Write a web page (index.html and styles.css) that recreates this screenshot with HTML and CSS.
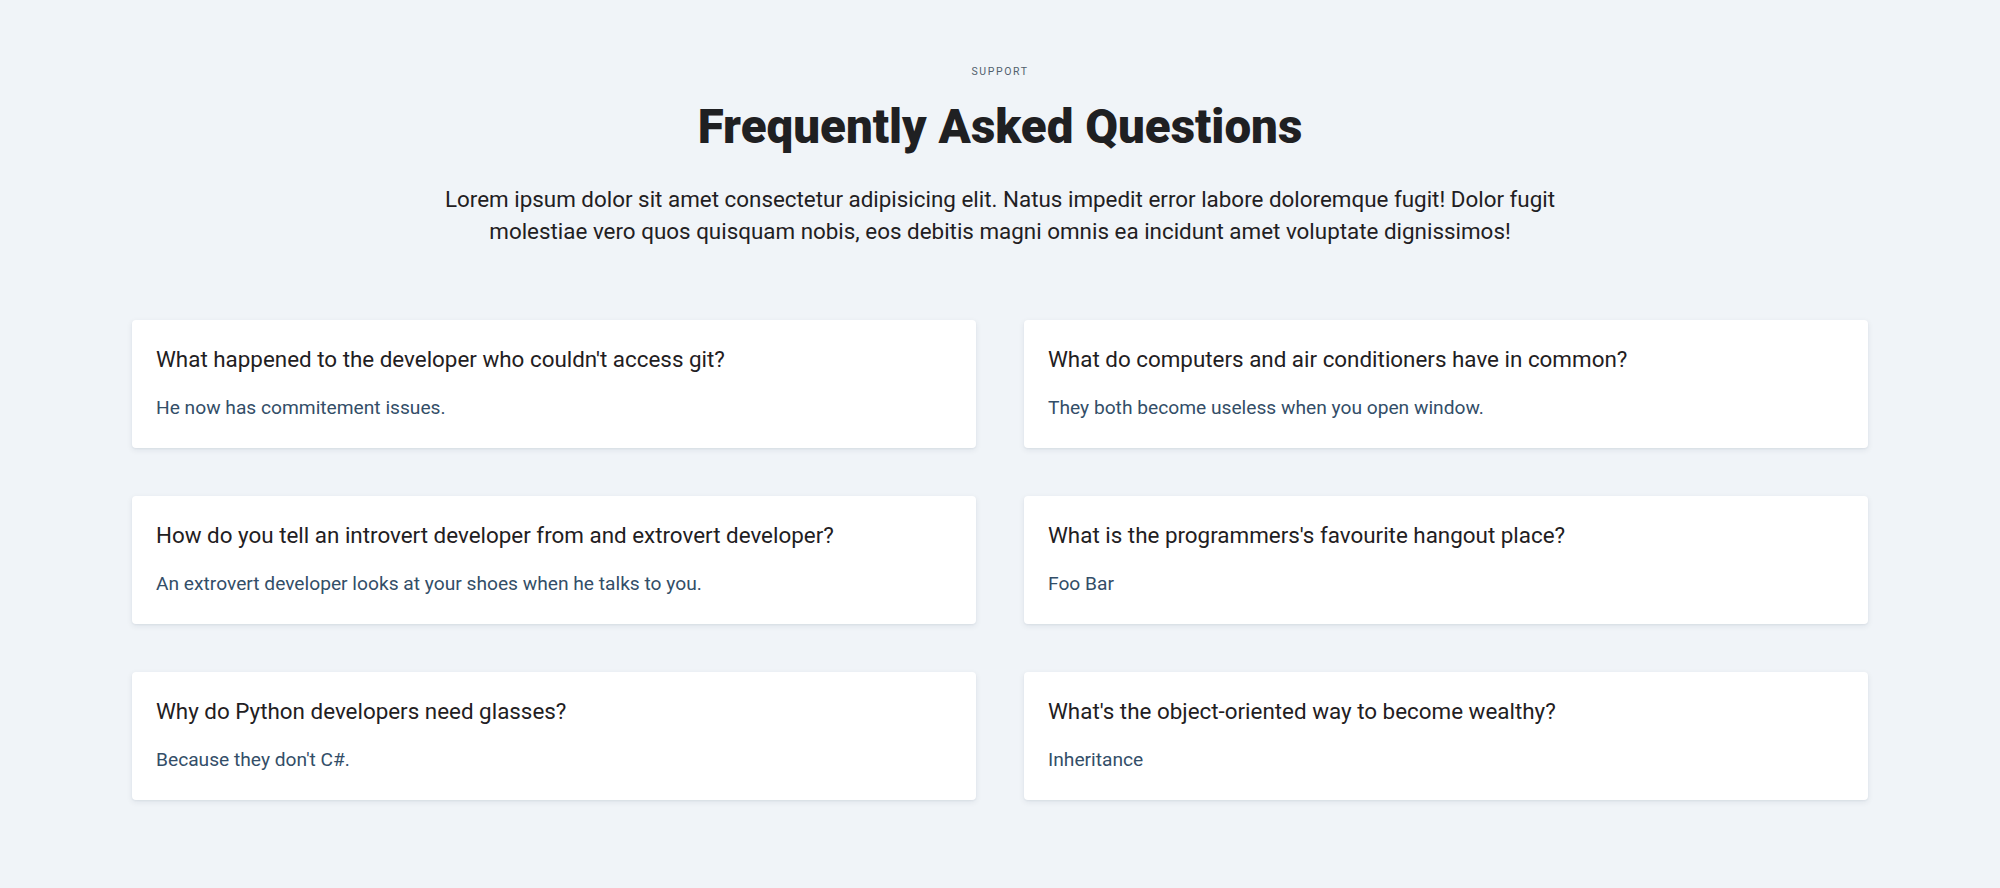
FILE: index.html
```html
<!DOCTYPE html>
<html lang="en">
<head>
<meta charset="utf-8">
<title>FAQ</title>
<link rel="stylesheet" href="styles.css">
</head>
<body>
<section class="faq">
  <header class="faq-header">
    <p class="eyebrow">Support</p>
    <h1 class="title">Frequently Asked Questions</h1>
    <p class="lead">Lorem ipsum dolor sit amet consectetur adipisicing elit. Natus impedit error labore doloremque fugit! Dolor fugit molestiae vero quos quisquam nobis, eos debitis magni omnis ea incidunt amet voluptate dignissimos!</p>
  </header>
  <div class="grid">
    <div class="card">
      <h3 class="q">What happened to the developer who couldn't access git?</h3>
      <p class="a">He now has commitement issues.</p>
    </div>
    <div class="card">
      <h3 class="q">What do computers and air conditioners have in common?</h3>
      <p class="a">They both become useless when you open window.</p>
    </div>
    <div class="card">
      <h3 class="q">How do you tell an introvert developer from and extrovert developer?</h3>
      <p class="a">An extrovert developer looks at your shoes when he talks to you.</p>
    </div>
    <div class="card">
      <h3 class="q">What is the programmers's favourite hangout place?</h3>
      <p class="a">Foo Bar</p>
    </div>
    <div class="card">
      <h3 class="q">Why do Python developers need glasses?</h3>
      <p class="a">Because they don't C#.</p>
    </div>
    <div class="card">
      <h3 class="q">What's the object-oriented way to become wealthy?</h3>
      <p class="a">Inheritance</p>
    </div>
  </div>
</section>
</body>
</html>
```
FILE: styles.css
```css
* { box-sizing: border-box; }
html, body { margin: 0; padding: 0; }
body {
  background: #f0f4f8;
  font-family: Roboto, "Liberation Sans", Arial, sans-serif;
  color: #1f2933;
}
.faq {
  padding: 64px 132px 88px;
}
.faq-header {
  display: flex;
  flex-direction: column;
  align-items: center;
  text-align: center;
}
.eyebrow {
  margin: 0;
  font-size: 10.5px;
  line-height: 16px;
  letter-spacing: 1.6px;
  text-transform: uppercase;
  color: #52606d;
}
.title {
  margin: 19px 0 0;
  font-size: 47.5px;
  line-height: 56px;
  font-weight: 900;
  color: #1f2022;
}
.lead {
  margin: 28px 0 0;
  max-width: 1160px;
  font-size: 22.4px;
  line-height: 32px;
  color: #1f2022;
}
.grid {
  margin-top: 73px;
  display: grid;
  grid-template-columns: 1fr 1fr;
  gap: 48px;
}
.card {
  background: #fff;
  border-radius: 4px;
  padding: 23px 24px 28px;
  height: 128px;
  box-shadow: 0 2px 6px rgba(15, 40, 70, 0.08), 0 1px 2px rgba(15, 40, 70, 0.05);
}
.q {
  margin: 0;
  font-size: 22.4px;
  line-height: 32px;
  font-weight: 400;
  color: #1f2022;
}
.a {
  margin: 21px 0 0;
  font-size: 19.2px;
  line-height: 24px;
  color: #334e68;
}
```
